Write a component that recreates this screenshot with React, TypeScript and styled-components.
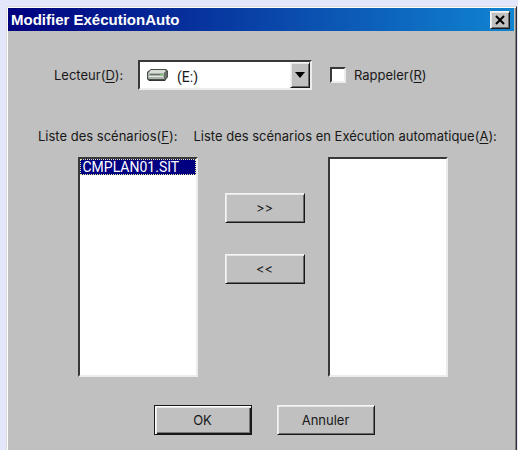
import React, { useState } from "react";
import styled, { createGlobalStyle, css } from "styled-components";

const GlobalStyle = createGlobalStyle`
  *, *::before, *::after { box-sizing: border-box; }
  body {
    margin: 0;
    overflow: hidden;
    background: #e4e6fb;
    color: #181818;
    font: 13px/16px Inter, "Liberation Sans", Arial, sans-serif;
  }
  button, input, select { font: inherit; color: inherit; border-radius: 0; margin: 0; }
  u { text-underline-offset: 2px; }
`;

const Page = styled.div`
  height: 100vh;
  padding: 6px 1px 0 6px;
  overflow: hidden;
`;

const raised = css`
  border: 1px solid;
  border-color: #f4f4f4 #181818 #181818 #f4f4f4;
  box-shadow: inset 1px 1px #e6e6e6, inset -1px -1px #686868;
`;

const sunken = css`
  border: 2px solid;
  border-color: #383838 #ececec #ececec #383838;
  background: #fff;
`;

const Dialog = styled.main`
  min-height: 100%;
  padding: 1px 2px 20px 1px;
  background: #c0c0c0;
  border: 1px solid;
  border-color: #dcdcdc #303030 #303030 #dcdcdc;
  box-shadow: inset 1px 1px #fff, inset -1px -1px #808080;
`;

const TitleBar = styled.header`
  display: flex;
  align-items: center;
  justify-content: space-between;
  height: 23px;
  padding: 0 4px 0 3px;
  background: linear-gradient(90deg, #00007e, #0b51b0 60%, #1084d0);
`;

const Title = styled.h1`
  margin: 0;
  color: #fff;
  font-family: "Liberation Sans", Arial, sans-serif;
  font-size: 15px;
  line-height: 18px;
  white-space: nowrap;
`;

const CloseButton = styled.button`
  ${raised}
  display: grid;
  place-items: center;
  width: 20px;
  height: 18px;
  padding: 0;
  background: #c0c0c0;
`;

const DriveRow = styled.div`
  display: flex;
  align-items: center;
  margin-top: 29px;
  padding-left: 46px;
  white-space: nowrap;
`;

const DriveLabel = styled.label`
  flex: 0 0 84px;
`;

const Combo = styled.div`
  ${sunken}
  display: flex;
  align-items: center;
  flex: 0 0 174px;
  height: 30px;
  padding-left: 7px;
`;

const DriveSelect = styled.select`
  flex: 1;
  min-width: 0;
  height: 24px;
  padding: 4px 0 0 9px;
  border: 0;
  outline: 0;
  appearance: none;
  background: transparent;
  font-family: Roboto, "Liberation Sans", sans-serif;
  font-size: 14px;
`;

const Arrow = styled.span`
  ${raised}
  display: grid;
  place-items: center;
  width: 20px;
  height: 26px;
  background: #c0c0c0;
  pointer-events: none;
`;

const RecallLabel = styled.label`
  display: flex;
  align-items: center;
  gap: 8px;
  margin-left: 18px;
`;

const CheckBox = styled.input`
  ${sunken}
  width: 16px;
  height: 16px;
  appearance: none;
  &:checked { background: #303030; background-clip: content-box; padding: 2px; }
`;

const ListLabels = styled.div`
  display: flex;
  gap: 16px;
  margin-top: 38px;
  padding-left: 30px;
  white-space: nowrap;
`;

const Transfer = styled.div`
  display: grid;
  grid-template-columns: 120px 84px 120px;
  justify-content: center;
  column-gap: 23px;
  margin-top: 13px;
  padding-left: 3px;
`;

const ListBox = styled.select`
  ${sunken}
  width: 100%;
  height: 220px;
  padding: 0;
  outline: 0;
  overflow: hidden;
  appearance: none;
  font-family: Roboto, "Liberation Sans", sans-serif;
  font-size: 14px;
`;

const Item = styled.option`
  min-height: 16px;
  padding: 0 3px;
  line-height: 16px;
  &:checked {
    color: #fff;
    background: #000080 linear-gradient(#000080, #000080);
    outline: 1px dotted #e8e8a0;
    outline-offset: -1px;
  }
`;

const MoveButtons = styled.div`
  display: flex;
  flex-direction: column;
  gap: 31px;
  padding: 36px 0 0 4px;
`;

const PushButton = styled.button<{ $primary?: boolean }>`
  ${raised}
  height: 30px;
  padding: 0;
  background: #c0c0c0;
  ${({ $primary }) =>
    $primary &&
    css`
      border-color: #181818;
      box-shadow: inset 1px 1px #fff, inset 2px 2px #e6e6e6, inset -1px -1px #181818, inset -2px -2px #787878;
    `}
`;

const Actions = styled.footer`
  display: grid;
  grid-template-columns: 98px 98px;
  justify-content: center;
  gap: 25px;
  margin-top: 28px;
  padding-left: 6px;
`;

const DriveIcon = () => (
  <svg width="21" height="14" viewBox="0 0 21 14" aria-hidden="true">
    <path d="M4 1h15l2 2v6l-3 4H2l-2-2V4z" fill="#4a4e4a" />
    <path d="M4 2h14l1 1-2 2H1z" fill="#d6ddd6" />
    <path d="M1 5h16v6H2l-1-1z" fill="#a9b3a9" />
    <path d="M17 5l3-2v6l-3 3z" fill="#6a706a" />
    <path d="M3 6.5h10" stroke="#6a726a" />
    <path d="M2 8.500h14" stroke="#e2e8e2" />
    <path d="M13 6h3v1h-3z" fill="#60c060" />
    <path d="M2 12.500h16" stroke="#303430" />
  </svg>
);

export default function App() {
  const [recall, setRecall] = useState(false);
  return (
    <>
      <GlobalStyle />
      <Page>
        <Dialog>
          <TitleBar>
            <Title>Modifier ExécutionAuto</Title>
            <CloseButton type="button" aria-label="Fermer">
              <svg width="12" height="10" viewBox="0 0 12 10" aria-hidden="true">
                <path d="M2 1l8 8M10 1L2 9" stroke="#000" strokeWidth="2" />
              </svg>
            </CloseButton>
          </TitleBar>
          <DriveRow>
            <DriveLabel htmlFor="drive">Lecteur(<u>D</u>):</DriveLabel>
            <Combo>
              <DriveIcon />
              <DriveSelect id="drive">
                <option>(E:)</option>
              </DriveSelect>
              <Arrow>
                <svg width="10" height="6" viewBox="0 0 10 6" aria-hidden="true">
                  <path d="M0 0h10L5 6z" fill="#000" />
                </svg>
              </Arrow>
            </Combo>
            <RecallLabel>
              <CheckBox type="checkbox" checked={recall} onChange={(e) => setRecall(e.target.checked)} />
              <span>Rappeler(<u>R</u>)</span>
            </RecallLabel>
          </DriveRow>
          <ListLabels>
            <label htmlFor="scenarios">Liste des scénarios(<u>F</u>):</label>
            <label htmlFor="automatic">Liste des scénarios en Exécution automatique(<u>A</u>):</label>
          </ListLabels>
          <Transfer>
            <ListBox id="scenarios" multiple defaultValue={["CMPLAN01.SIT"]}>
              <Item value="CMPLAN01.SIT">CMPLAN01.SIT</Item>
            </ListBox>
            <MoveButtons>
              <PushButton type="button">&gt;&gt;</PushButton>
              <PushButton type="button">&lt;&lt;</PushButton>
            </MoveButtons>
            <ListBox id="automatic" multiple />
          </Transfer>
          <Actions>
            <PushButton type="button" $primary>OK</PushButton>
            <PushButton type="button">Annuler</PushButton>
          </Actions>
        </Dialog>
      </Page>
    </>
  );
}
